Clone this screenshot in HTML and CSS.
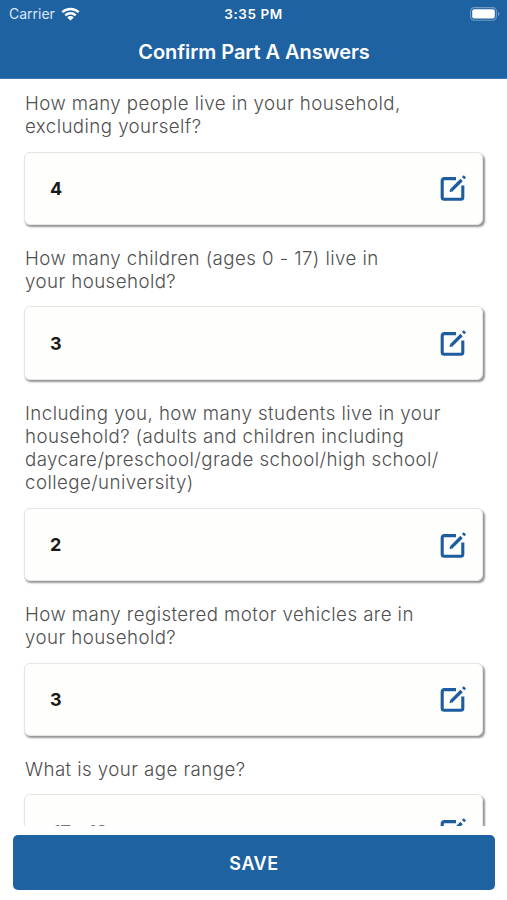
FILE: index.html
```html
<!DOCTYPE html>
<html lang="en">
<head>
    <meta charset="UTF-8">
    <meta name="viewport" content="width=device-width, initial-scale=1.0">
    <title>Confirm Part A Answers</title>
    <link rel="stylesheet" href="styles.css">
</head>
<body>
    <!-- Edit icon shared by all the answer cards -->
    <svg class="icon-defs" width="0" height="0">
        <symbol id="edit" viewBox="0 0 28 28">
            <path d="M17 4.6H5.2a2 2 0 0 0-2 2v16.6a2 2 0 0 0 2 2h16.6a2 2 0 0 0 2-2V11.4" fill="none" stroke="#1c5c9f" stroke-width="3.1"/>
            <path d="M12.2 16.4 22.6 6" fill="none" stroke="#1c5c9f" stroke-width="3.3"/>
            <path d="M10.6 18.1l.5-3 2.5 2.5z" fill="#1c5c9f"/>
            <path d="M24.1 4.1 25.9 2.3" fill="none" stroke="#1c5c9f" stroke-width="3.3"/>
        </symbol>
    </svg>

    <div class="screen">
        <header class="header">
            <div class="status-bar">
                <div class="carrier">
                    <span>Carrier</span>
                    <svg class="wifi" width="19" height="14" viewBox="0 0 19 14">
                        <path d="M1.3 5.2a11.8 11.8 0 0 1 16.4 0M4.3 8.3a7.5 7.5 0 0 1 10.4 0" fill="none" stroke="#fff" stroke-width="2.5"/>
                        <path d="M9.5 13.6 6.3 10.4a4.6 4.6 0 0 1 6.4 0z" fill="#fff"/>
                    </svg>
                </div>
                <div class="time">3:35 PM</div>
                <svg class="battery" width="30" height="14" viewBox="0 0 30 14">
                    <rect x=".6" y=".6" width="25.8" height="12.6" rx="3.6" fill="none" stroke="#6f9bc8" stroke-width="1.1"/>
                    <rect x="2.2" y="2.2" width="22.6" height="9.4" rx="2" fill="#fff"/>
                    <path d="M28 4.8c2 .8 2 3.4 0 4.2z" fill="#6f9bc8"/>
                </svg>
            </div>
            <h1>Confirm Part A Answers</h1>
        </header>

        <main class="questions">
            <section class="question">
                <p>How many people live in your household,<br>excluding yourself?</p>
                <div class="card">
                    <span>4</span>
                    <svg class="edit"><use href="#edit"/></svg>
                </div>
            </section>

            <section class="question">
                <p>How many children (ages 0 - 17) live in<br>your household?</p>
                <div class="card">
                    <span>3</span>
                    <svg class="edit"><use href="#edit"/></svg>
                </div>
            </section>

            <section class="question">
                <p>Including you, how many students live in your<br>household? (adults and children including<br>daycare/preschool/grade school/high school/<br>college/university)</p>
                <div class="card">
                    <span>2</span>
                    <svg class="edit"><use href="#edit"/></svg>
                </div>
            </section>

            <section class="question">
                <p>How many registered motor vehicles are in<br>your household?</p>
                <div class="card">
                    <span>3</span>
                    <svg class="edit"><use href="#edit"/></svg>
                </div>
            </section>

            <section class="question">
                <p>What is your age range?</p>
                <div class="card">
                    <span class="range">17 - 18</span>
                    <svg class="edit"><use href="#edit"/></svg>
                </div>
            </section>
        </main>

        <footer class="footer">
            <button type="button">SAVE</button>
        </footer>
    </div>
</body>
</html>
```
FILE: styles.css
```css
body {
    margin: 0;
    background-color: #fff;
    font-family: Inter, "Liberation Sans", sans-serif;
}

.icon-defs {
    display: none;
}

.screen {
    display: flex;
    flex-direction: column;
    height: 900px;
    overflow: hidden;
}

/* Header */
.header {
    flex: none;
    box-sizing: border-box;
    height: 79px;
    background-color: #1f62a2;
    border-bottom: 1px solid #3f78b0;
    color: #fff;
}

.status-bar {
    display: grid;
    grid-template-columns: 1fr auto 1fr;
    align-items: center;
    height: 27px;
    padding: 0 7px 0 9px;
    font-size: 14px;
}

.carrier {
    display: flex;
    align-items: center;
    gap: 6px;
    color: #d9e7f5;
}

.time {
    margin-right: 2px;
    font-size: 13.5px;
    font-weight: 600;
    letter-spacing: 0.55px;
}

.battery {
    justify-self: end;
}

h1 {
    margin: 0;
    padding-left: 1px;
    font-size: 20px;
    font-weight: 600;
    line-height: 51px;
    letter-spacing: -0.05px;
    text-align: center;
}

/* Questions */
.questions {
    flex: 1;
    min-height: 0;
    overflow: hidden;
    padding: 13px 24px 0 24px;
}

.question {
    margin-bottom: 21.7px;
}

.question p {
    margin: 0 0 13px 1px;
    color: #505050;
    font-size: 18.7px;
    font-weight: 300;
    line-height: 23.3px;
    letter-spacing: 0.43px;
    white-space: nowrap;
}

.card {
    display: flex;
    align-items: center;
    justify-content: space-between;
    box-sizing: border-box;
    height: 73.5px;
    padding: 0 15px 0 25px;
    border: 1px solid #e6e6e6;
    border-radius: 6px;
    background-color: #fefefc;
    box-shadow: 1.5px 2px 2px rgba(0, 0, 0, 0.42);
    color: #1a1a1a;
    font-size: 18px;
    font-weight: 700;
}

.range {
    padding: 3px 0 0 3px;
    color: #777;
    font-weight: 600;
}

.edit {
    width: 28px;
    height: 28px;
}

/* Save button */
.footer {
    flex: none;
    padding: 9.5px 12px 10px 13px;
}

button {
    display: block;
    width: 100%;
    height: 55px;
    padding: 1px 0 0;
    border: none;
    border-radius: 5px;
    background-color: #1f62a2;
    color: #fff;
    font-family: inherit;
    font-size: 18px;
    font-weight: 600;
    letter-spacing: 0.5px;
}
```
